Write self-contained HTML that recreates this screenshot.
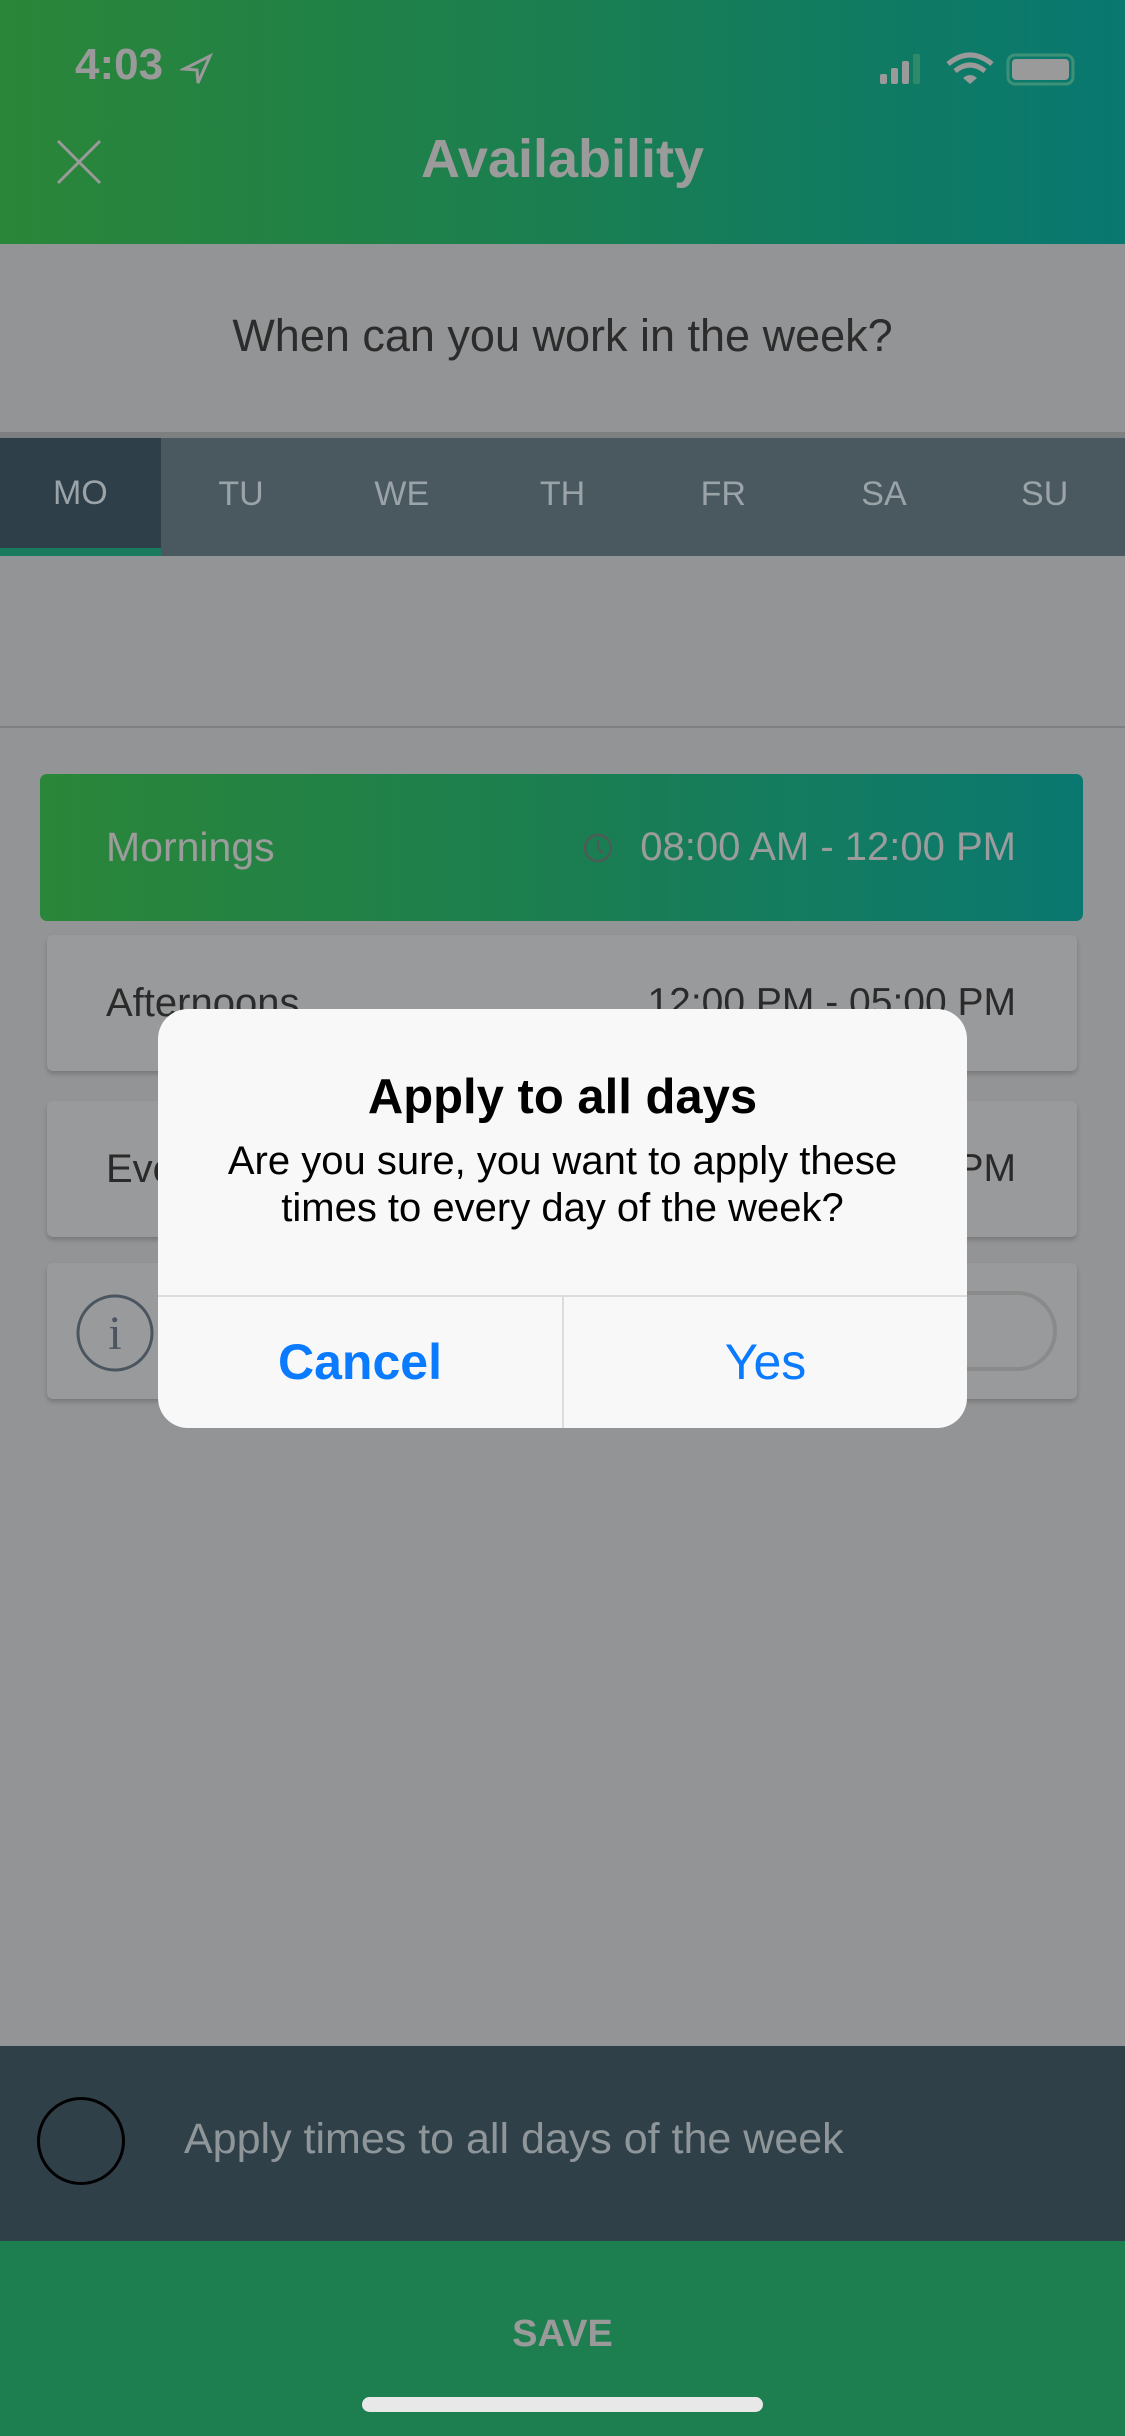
<!DOCTYPE html>
<html><head><meta charset="utf-8"><style>
*{margin:0;padding:0;box-sizing:border-box}
body{width:1125px;height:2436px;position:relative;overflow:hidden;background:#939495;font-family:"Liberation Sans",sans-serif}
.abs{position:absolute}
.hdr{left:0;top:0;width:1125px;height:244px;background:linear-gradient(90deg,#2a8638,#1c7f4e 45%,#087870)}
.tabs{left:0;top:438px;width:1125px;height:118px;background:#4a5960;display:flex}
.tab{flex:1;text-align:center;line-height:112px;font-size:34px;color:#9aa3a8}
.tab.on{background:#2f3f49;border-bottom:8px solid #1a7a5e;line-height:110px}
.card{left:47px;width:1030px;height:136px;background:#999a9b;border-radius:6px;box-shadow:0 3px 4px rgba(0,0,0,.18)}
.card .l{position:absolute;left:59px;top:0;line-height:136px;font-size:40px;color:#2a2a2a}
.card .r{position:absolute;right:61px;top:0;line-height:136px;font-size:39px;color:#2a2a2a}
</style></head><body>
<div class="abs hdr"></div>
<div class="abs" style="left:75px;top:40px;font-size:44px;font-weight:bold;color:#9a9a9a">4:03</div>
<svg class="abs" style="left:180px;top:53px" width="34" height="34" viewBox="0 0 34 34"><path d="M30 3 L4 16 L17 17 L18 30 Z" fill="none" stroke="#9a9a9a" stroke-width="3"/></svg>
<svg class="abs" style="left:878px;top:52px" width="200" height="36" viewBox="0 0 200 36">
<rect x="2" y="22" width="7" height="10" rx="2" fill="#9a9a9a"/><rect x="13" y="16" width="7" height="16" rx="2" fill="#9a9a9a"/><rect x="24" y="9" width="7" height="23" rx="2" fill="#9a9a9a"/><rect x="35" y="2" width="7" height="30" rx="2" fill="#2f8a6a"/>
<path d="M70 12 Q92 -6 114 12" fill="none" stroke="#9a9a9a" stroke-width="5"/><path d="M77 19 Q92 7 107 19" fill="none" stroke="#9a9a9a" stroke-width="5"/><path d="M85 26 L92 32 L99 26 Q92 20 85 26Z" fill="#9a9a9a"/>
<rect x="130" y="3" width="65" height="29" rx="7" fill="none" stroke="#3d9177" stroke-width="3"/><rect x="134" y="7" width="57" height="21" rx="4" fill="#9a9a9a"/>
</svg>
<svg class="abs" style="left:55px;top:138px" width="48" height="48"><path d="M3 3 L45 45 M45 3 L3 45" stroke="#9a9a9a" stroke-width="3"/></svg>
<div class="abs" style="left:0;width:1125px;top:128px;text-align:center;font-size:54px;font-weight:bold;color:#9b9b9b">Availability</div>
<div class="abs" style="left:0;width:1125px;top:310px;text-align:center;font-size:45px;color:#2c2c2c">When can you work in the week?</div>
<div class="abs" style="left:0;top:432px;width:1125px;height:6px;background:#7e7f80"></div>
<div class="abs tabs"><div class="tab on">MO</div><div class="tab">TU</div><div class="tab">WE</div><div class="tab">TH</div><div class="tab">FR</div><div class="tab">SA</div><div class="tab">SU</div></div>
<div class="abs" style="left:0;top:726px;width:1125px;height:2px;background:#7f8081"></div>
<div class="abs" style="left:40px;top:774px;width:1043px;height:147px;border-radius:7px;background:linear-gradient(90deg,#2a8638,#1d7f4e 45%,#0a7870)">
<div style="position:absolute;left:66px;line-height:147px;font-size:41px;color:#9c9c9c">Mornings</div>
<svg style="position:absolute;left:542px;top:58px" width="32" height="32"><circle cx="16" cy="16" r="13" fill="none" stroke="#4b5b55" stroke-width="2.5"/><path d="M16 8 V17 L21 21" fill="none" stroke="#4b5b55" stroke-width="2.5"/></svg>
<div style="position:absolute;right:67px;line-height:147px;font-size:40px;color:#9c9c9c">08:00 AM - 12:00 PM</div></div>
<div class="abs card" style="top:935px"><div class="l">Afternoons</div><div class="r">12:00 PM - 05:00 PM</div></div>
<div class="abs card" style="top:1101px"><div class="l">Evenings</div><div class="r">05:00 PM - 10:00 PM</div></div>
<div class="abs card" style="top:1263px"><svg style="position:absolute;left:28px;top:30px" width="80" height="80"><circle cx="40" cy="40" r="37" fill="none" stroke="#4a5560" stroke-width="3"/><text x="40" y="56" text-anchor="middle" font-family="Liberation Serif" font-size="48" fill="#4a5560">i</text></svg>
<div style="position:absolute;right:20px;top:28px;width:150px;height:80px;border-radius:40px;border:4px solid #8a8a8a"></div></div>
<div class="abs" style="left:158px;top:1009px;width:809px;height:419px;background:#f8f8f8;border-radius:30px;overflow:hidden">
<div style="position:absolute;top:60px;width:100%;text-align:center;font-size:49px;font-weight:bold;color:#000">Apply to all days</div>
<div style="position:absolute;top:129px;width:100%;text-align:center;font-size:40px;line-height:47px;color:#000">Are you sure, you want to apply these<br>times to every day of the week?</div>
<div style="position:absolute;top:286px;left:0;width:100%;height:2px;background:#dcdcdc"></div>
<div style="position:absolute;top:288px;left:404px;width:2px;height:131px;background:#dcdcdc"></div>
<div style="position:absolute;top:288px;left:0;width:404px;line-height:131px;text-align:center;font-size:50px;font-weight:bold;color:#0a7bff">Cancel</div>
<div style="position:absolute;top:288px;left:406px;width:403px;line-height:131px;text-align:center;font-size:50px;color:#0a7bff">Yes</div></div>
<div class="abs" style="left:0;top:2046px;width:1125px;height:195px;background:#304049"></div>
<div class="abs" style="left:37px;top:2097px;width:88px;height:88px;border-radius:50%;border:3px solid #000"></div>
<div class="abs" style="left:184px;top:2115px;font-size:43px;color:#8f9699">Apply times to all days of the week</div>
<div class="abs" style="left:0;top:2241px;width:1125px;height:195px;background:#1d7e50"></div>
<div class="abs" style="left:0;width:1125px;top:2313px;text-align:center;font-size:38px;font-weight:bold;color:#9a9a9a">SAVE</div>
<div class="abs" style="left:362px;top:2397px;width:401px;height:15px;border-radius:8px;background:#e8e8e8"></div>
</body></html>
